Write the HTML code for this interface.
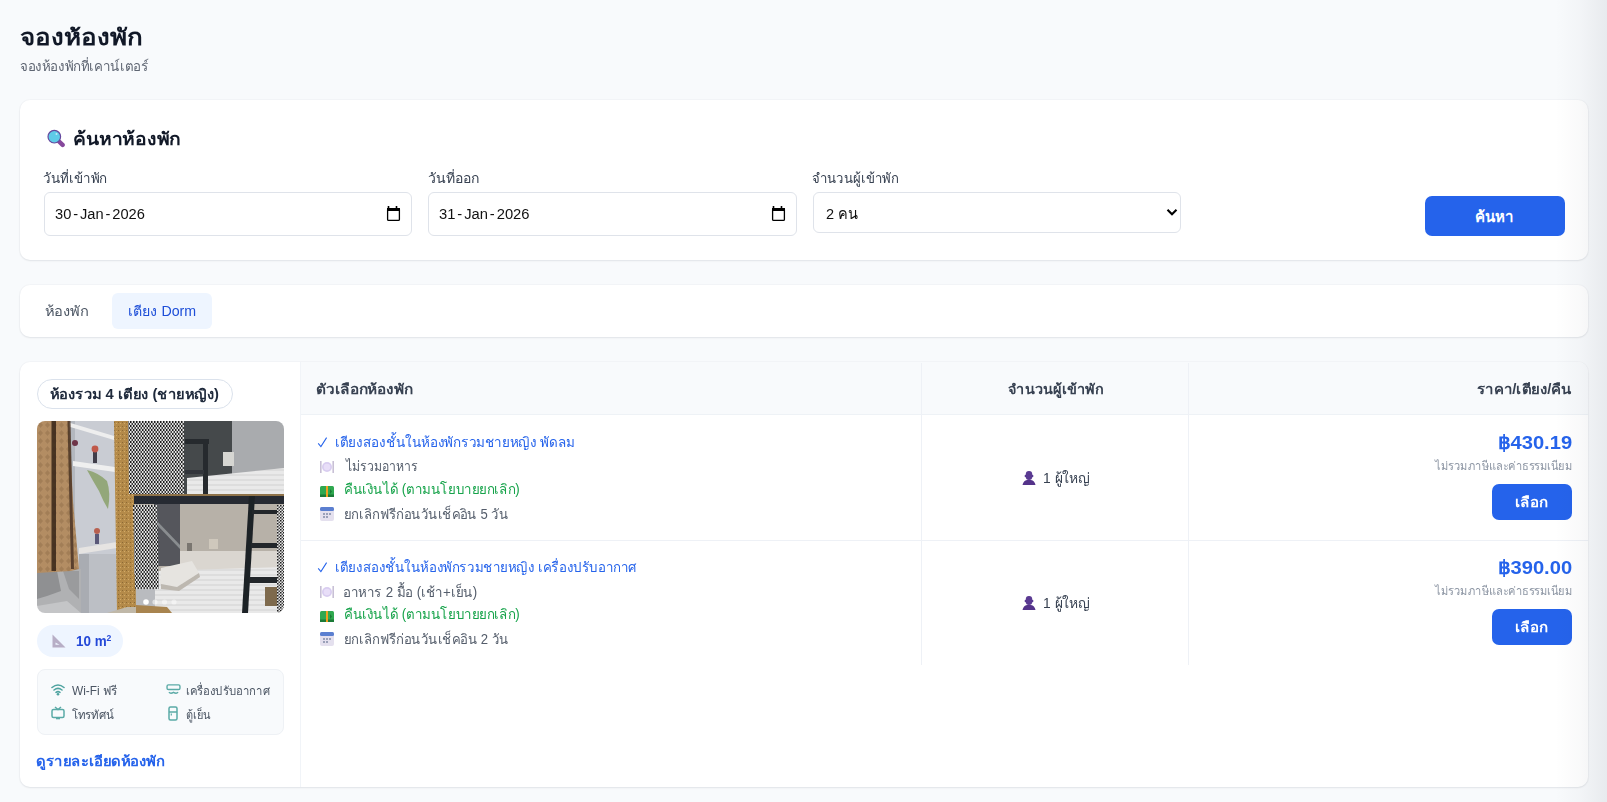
<!DOCTYPE html>
<html><head><meta charset="utf-8">
<style>
*{box-sizing:border-box;margin:0;padding:0}
html,body{width:1607px;height:802px;overflow:hidden}
body{background:#f8fafc;font-family:"Liberation Sans",sans-serif;color:#1f2937;position:relative}
.abs{position:absolute}
.t{position:absolute;white-space:nowrap;line-height:1}
.card{position:absolute;background:#fff;border-radius:10px;box-shadow:0 1px 2px rgba(15,23,42,.08),0 0 0 1px rgba(15,23,42,.02)}
.inp{position:absolute;background:#fff;border:1px solid #dfe3ea;border-radius:6px}
.btn{position:absolute;background:#2563eb;border-radius:7px}
.overlay{position:absolute;left:0;top:0;width:1607px;height:802px;pointer-events:none;
 background:linear-gradient(to right,rgba(0,0,0,0) 0px,rgba(0,0,0,0) 1555px,rgba(20,30,50,.025) 1580px,rgba(20,30,50,.06) 1600px,rgba(20,30,50,.07) 1607px)}
</style></head><body>
<div id="title" class="t" style="left:19.76px;top:27.35px;font-size:22px;font-weight:bold;color:#111827;transform:scaleX(1.1798);transform-origin:0 0;">จองห้องพัก</div>
<div id="subtitle" class="t" style="left:19.6px;top:59.35px;font-size:14px;font-weight:normal;color:#5f6673;transform:scaleX(0.9519);transform-origin:0 0;">จองห้องพักที่เคาน์เตอร์</div>
<div class="card" style="left:20px;top:100px;width:1568px;height:160px"></div>
<svg class="abs" style="left:46px;top:128px" width="20" height="20" viewBox="0 0 20 20"><path d="M12 12.5 L16.6 16.9" stroke="#86489c" stroke-width="4.4" stroke-linecap="round"/><circle cx="8.3" cy="8.7" r="6.3" fill="#5ecbe8" stroke="#64489e" stroke-width="1.2"/><circle cx="10.5" cy="6" r="1" fill="#bfeaf6"/></svg>
<div id="ctitle" class="t" style="left:73.4px;top:129.85px;font-size:18px;font-weight:bold;color:#111827;transform:scaleX(1.0707);transform-origin:0 0;">ค้นหาห้องพัก</div>
<div id="lab1" class="t" style="left:42.88px;top:170.9px;font-size:14px;font-weight:normal;color:#374151;transform:scaleX(0.9545);transform-origin:0 0;">วันที่เข้าพัก</div>
<div id="lab2" class="t" style="left:427.52px;top:170.75px;font-size:14px;font-weight:normal;color:#374151;transform:scaleX(1.0021);transform-origin:0 0;">วันที่ออก</div>
<div id="lab3" class="t" style="left:811.88px;top:171.0px;font-size:14px;font-weight:normal;color:#374151;transform:scaleX(0.9386);transform-origin:0 0;">จำนวนผู้เข้าพัก</div>
<div class="inp" style="left:44px;top:192px;width:368px;height:44px"></div>
<div class="inp" style="left:428px;top:192px;width:369px;height:44px"></div>
<div class="inp" style="left:813px;top:192px;width:368px;height:41px"></div>
<div id="date1" class="t" style="left:54.88px;top:205.9px;font-size:15.5px;font-weight:normal;color:#111;transform:scaleX(0.9457);transform-origin:0 0;">30<span style="margin:0 2px">-</span>Jan<span style="margin:0 2px">-</span>2026</div>
<div id="date2" class="t" style="left:438.8px;top:205.9px;font-size:15.5px;font-weight:normal;color:#111;transform:scaleX(0.9520);transform-origin:0 0;">31<span style="margin:0 2px">-</span>Jan<span style="margin:0 2px">-</span>2026</div>
<svg class="abs" style="left:386px;top:205px" width="15" height="17" viewBox="0 0 15 17"><path d="M2.5 1 V4 M10.5 1 V4" stroke="#000" stroke-width="1.6"/><rect x="1.6" y="3.6" width="11.8" height="11.8" rx="1" fill="none" stroke="#000" stroke-width="1.3"/><rect x="1" y="3" width="13" height="3" fill="#000"/></svg>
<svg class="abs" style="left:771px;top:205px" width="15" height="17" viewBox="0 0 15 17"><path d="M2.5 1 V4 M10.5 1 V4" stroke="#000" stroke-width="1.6"/><rect x="1.6" y="3.6" width="11.8" height="11.8" rx="1" fill="none" stroke="#000" stroke-width="1.3"/><rect x="1" y="3" width="13" height="3" fill="#000"/></svg>
<svg class="abs" style="left:1166px;top:208px" width="12" height="9" viewBox="0 0 12 9"><path d="M1.5 1.8 L6 6.3 L10.5 1.8" fill="none" stroke="#000" stroke-width="2.1"/></svg>
<div id="sel" class="t" style="left:825.8px;top:205.55px;font-size:15.5px;font-weight:normal;color:#111;transform:scaleX(0.9384);transform-origin:0 0;">2 คน</div>
<div class="btn" style="left:1425px;top:196px;width:140px;height:40px"></div>
<div id="sbtn" class="t" style="left:1475.24px;top:208.8px;font-size:15px;font-weight:bold;color:#fff;">ค้นหา</div>
<div class="card" style="left:20px;top:285px;width:1568px;height:52px"></div>
<div id="tab1" class="t" style="left:45.0px;top:304.35px;font-size:14px;font-weight:normal;color:#4b5563;transform:scaleX(1.0465);transform-origin:0 0;">ห้องพัก</div>
<div class="abs" style="left:112px;top:293px;width:100px;height:36px;background:#eef5ff;border-radius:6px"></div>
<div id="tab2" class="t" style="left:127.84px;top:303.5px;font-size:14px;font-weight:normal;color:#1d4ed8;transform:scaleX(1.0152);transform-origin:0 0;">เตียง Dorm</div>
<div class="card" style="left:20px;top:362px;width:1568px;height:425px;overflow:hidden">
  <div class="abs" style="left:280px;top:0;width:1288px;height:53px;background:#f8fafc;border-bottom:1px solid #eef2f6"></div>
  <div class="abs" style="left:280px;top:0;width:1px;height:425px;background:#f1f4f8"></div>
</div>
<div class="abs" style="left:37px;top:379px;width:196px;height:30px;border:1px solid #dbe2ec;border-radius:15px;background:#fff"></div>
<div id="chip" class="t" style="left:50.16px;top:386.6px;font-size:14px;font-weight:bold;color:#1e293b;transform:scaleX(1.0506);transform-origin:0 0;">ห้องรวม 4 เตียง (ชายหญิง)</div>
<svg class="abs" style="left:37px;top:421px" width="247" height="192" viewBox="0 0 247 192">
<defs>
<clipPath id="rc"><rect x="0" y="0" width="247" height="192" rx="8" ry="8"/></clipPath>
<pattern id="chk" width="3" height="3" patternUnits="userSpaceOnUse"><rect width="3" height="3" fill="#e8e8e8"/><rect width="1.5" height="1.5" fill="#1c1c1c"/><rect x="1.5" y="1.5" width="1.5" height="1.5" fill="#4a4a4a"/></pattern>
<pattern id="chk2" width="3" height="4" patternUnits="userSpaceOnUse"><rect width="3" height="4" fill="#e2e2e2"/><rect width="1.5" height="2" fill="#1a1a1a"/><rect x="1.5" y="2" width="1.5" height="2" fill="#3c3c3c"/></pattern>
<pattern id="dia" width="7" height="8" patternUnits="userSpaceOnUse"><rect width="7" height="8" fill="#b38d64"/><path d="M3.5 1 L6 4 L3.5 7 L1 4Z" fill="#94704c" opacity=".55"/></pattern>
<pattern id="cork" width="4" height="4" patternUnits="userSpaceOnUse"><rect width="4" height="4" fill="#b48a48"/><rect x="1" y="1" width="1" height="1" fill="#8c6a34"/><rect x="3" y="2" width="1" height="1" fill="#d0aa68"/></pattern>
<pattern id="str" width="5" height="5" patternUnits="userSpaceOnUse"><rect width="5" height="5" fill="#e9e9e9"/><rect y="3.5" width="5" height="1" fill="#d2d2d2"/></pattern>
<filter id="soft"><feGaussianBlur stdDeviation="0.35"/></filter>
</defs>
<g clip-path="url(#rc)"><g filter="url(#soft)">
<rect width="247" height="192" fill="#b9bbbf"/>
<!-- left wall -->
<rect x="30" y="0" width="50" height="192" fill="#c9ccd3"/>
<rect x="30" y="0" width="8" height="192" fill="#b3b7be"/>
<!-- shelves -->
<polygon points="30,1 77,15 77,19 30,5" fill="#eeeeee"/>
<polygon points="36,40 78,46 78,51 36,45" fill="#efefef"/>
<polygon points="42,127 80,121 80,127 42,133" fill="#e6e4e2"/>
<!-- lower wall -->
<rect x="42" y="133" width="38" height="59" fill="#bcbfc5"/>
<rect x="42" y="133" width="10" height="59" fill="#a9acb2"/>
<!-- flowers & plant -->
<rect x="56" y="31" width="4" height="11" fill="#3f3c4a"/>
<circle cx="58" cy="28" r="3.4" fill="#c0584a"/>
<circle cx="38" cy="22" r="3" fill="#6e3448"/>
<path d="M50 49 Q62 52 70 60 Q74 72 71 88 Q66 80 62 70 Q56 60 50 49Z" fill="#8aa06a" opacity=".85"/>
<rect x="58" y="113" width="4" height="10" fill="#5a5878"/>
<circle cx="60" cy="110" r="3" fill="#b86050"/>
<!-- lower left shadows -->
<rect x="0" y="148" width="44" height="44" fill="#b0b1b3"/>
<polygon points="0,150 20,150 24,170 10,175 0,178" fill="#8f9092"/>
<polygon points="26,150 42,150 42,178 32,168" fill="#9a9b9d"/>
<polygon points="0,185 30,180 44,192 0,192" fill="#c4c5c7"/>
<!-- curtain -->
<polygon points="0,0 32,0 36,80 42,148 34,150 0,152" fill="url(#dia)"/>
<rect x="14.5" y="0" width="4.5" height="150" fill="#3c2a1c" opacity=".9"/>
<polygon points="30.5,0 33.5,0 37,148 34,148" fill="#4a3424" opacity=".85"/>
<!-- cork strip -->
<polygon points="77,0 97,0 99,192 80,192" fill="url(#cork)"/>
<!-- upper back walls -->
<rect x="97" y="0" width="98" height="84" fill="#45484c"/>
<rect x="195" y="0" width="52" height="84" fill="#a9abae"/>
<rect x="186" y="31" width="11" height="14" fill="#d6d6d2"/>
<!-- upper mattress -->
<polygon points="150,57 247,47 247,73 150,73" fill="url(#str)"/>
<!-- upper checkered curtain -->
<polygon points="91,0 147,0 147,73 92,73" fill="url(#chk2)"/>
<!-- upper frame -->
<rect x="148" y="18" width="24" height="5" fill="#25292e"/>
<rect x="166" y="18" width="5" height="66" fill="#25292e"/>
<rect x="148" y="49" width="19" height="4" fill="#30343a"/>
<rect x="97" y="73" width="150" height="2" fill="#8e7248"/>
<rect x="97" y="75" width="150" height="8" fill="#262a30"/>
<!-- lower walls -->
<rect x="97" y="83" width="150" height="70" fill="#b7b1a8"/>
<rect x="117" y="83" width="26" height="62" fill="#54575b"/>
<polygon points="120,100 143,124 143,128 120,104" fill="#8a8d90"/>
<rect x="143" y="130" width="104" height="21" fill="#dad6d0"/>
<rect x="150" y="122" width="5" height="8" fill="#7a7670"/>
<rect x="172" y="118" width="9" height="10" fill="#cfc8bc"/>
<!-- lower bed -->
<polygon points="118,150 247,146 247,192 118,192" fill="url(#str)"/>
<polygon points="124,147 155,140 162,152 140,166 123,163" fill="#e6e4e0"/>
<polygon points="124,163 140,166 162,152 163,156 142,170 124,168" fill="#bdb8b0"/>
<!-- lower checkered -->
<polygon points="96,84 120,84 122,168 98,168" fill="url(#chk2)"/>
<!-- ladder -->
<polygon points="212,75 218,75 211,192 205,192" fill="#1f2328"/>
<rect x="215" y="89" width="32" height="4" fill="#23272c"/>
<rect x="214" y="122" width="33" height="5" fill="#23272c"/>
<rect x="212" y="156" width="35" height="6" fill="#23272c"/>
<rect x="240" y="84" width="7" height="108" fill="url(#chk)"/>
<rect x="228" y="166" width="12" height="19" fill="#7e6a4e"/>
<!-- floor cork -->
<polygon points="99,184 130,186 135,192 99,192" fill="#a88450"/>
<polygon points="70,192 90,186 99,186 99,192" fill="#c0b8a8"/>
</g>
<!-- dots -->
<circle cx="109" cy="181" r="2.8" fill="#ffffff"/>
<circle cx="118" cy="181" r="2.6" fill="#ffffff" opacity=".55"/>
<circle cx="127.5" cy="181" r="2.6" fill="#ffffff" opacity=".45"/>
<circle cx="137" cy="181" r="2.6" fill="#ffffff" opacity=".45"/>
</g>
</svg>

<div class="abs" style="left:37px;top:625px;width:86px;height:32px;border-radius:16px;background:#eef5ff"></div>
<svg class="abs" style="left:51px;top:633px" width="16" height="16" viewBox="0 0 16 16"><path d="M1.5 1.5 L14.5 14.5 L1.5 14.5Z" fill="#b7aec6"/><path d="M4.5 9.5 L8.5 11.8 L4.5 11.8Z" fill="#eef5ff"/></svg>
<div id="area" class="t" style="left:75.6px;top:633.8px;font-size:14px;font-weight:bold;color:#2348d8;transform:scaleX(0.9585);transform-origin:0 0;">10 m<sup style="font-size:9px;vertical-align:5px">2</sup></div>
<div class="abs" style="left:37px;top:669px;width:247px;height:66px;border:1px solid #eef1f5;border-radius:8px;background:#f8fafc"></div>
<svg class="abs" style="left:51px;top:683px" width="14" height="13" viewBox="0 0 14 13"><g fill="none" stroke="#4fa3a0" stroke-width="1.6" stroke-linecap="round"><path d="M1 4.5 Q7 -0.5 13 4.5"/><path d="M3 7 Q7 3.8 11 7"/><path d="M5 9.3 Q7 8 9 9.3"/></g><circle cx="7" cy="11.3" r="1.3" fill="#4fa3a0"/></svg>
<div id="am1" class="t" style="left:72.48px;top:684.75px;font-size:12px;font-weight:normal;color:#4b5563;transform:scaleX(0.9890);transform-origin:0 0;">Wi-Fi ฟรี</div>
<svg class="abs" style="left:165.5px;top:684px" width="15" height="12" viewBox="0 0 16 13"><g fill="none" stroke="#5aaaa6" stroke-width="1.5"><rect x="1" y="1" width="14" height="5" rx="1.5"/><path d="M3 9 Q5 11 8 9 Q11 11 13 9"/></g></svg>
<div id="am2" class="t" style="left:185.72px;top:685.1px;font-size:12px;font-weight:normal;color:#4b5563;transform:scaleX(0.9456);transform-origin:0 0;">เครื่องปรับอากาศ</div>
<svg class="abs" style="left:51px;top:706px" width="14" height="14" viewBox="0 0 14 14"><g fill="none" stroke="#5aaaa6" stroke-width="1.5"><rect x="1" y="3.5" width="12" height="8" rx="1.5"/><path d="M4 1 L7 3.5 L10 1"/></g><rect x="5" y="12" width="4" height="1.3" fill="#5aaaa6"/></svg>
<div id="am3" class="t" style="left:72.48px;top:709.3px;font-size:12px;font-weight:normal;color:#4b5563;transform:scaleX(0.9570);transform-origin:0 0;">โทรทัศน์</div>
<svg class="abs" style="left:168px;top:706px" width="10" height="15" viewBox="0 0 10 15"><g fill="none" stroke="#5aaaa6" stroke-width="1.5"><rect x="1" y="1" width="8" height="13" rx="1.5"/><path d="M1 6 H9"/></g><rect x="2.7" y="7.5" width="1.2" height="2" fill="#5aaaa6"/></svg>
<div id="am4" class="t" style="left:185.72px;top:709.0px;font-size:12px;font-weight:normal;color:#4b5563;transform:scaleX(0.9162);transform-origin:0 0;">ตู้เย็น</div>
<div id="link" class="t" style="left:36.2px;top:753.8px;font-size:14px;font-weight:bold;color:#2563eb;transform:scaleX(1.0609);transform-origin:0 0;">ดูรายละเอียดห้องพัก</div>
<div id="h1" class="t" style="left:316.36px;top:381.8px;font-size:14px;font-weight:bold;color:#374151;transform:scaleX(1.0955);transform-origin:0 0;">ตัวเลือกห้องพัก</div>
<div id="h2" class="t" style="left:1007.8px;top:381.8px;font-size:14px;font-weight:bold;color:#374151;transform:scaleX(1.0316);transform-origin:0 0;">จำนวนผู้เข้าพัก</div>
<div id="h3" class="t" style="right:34.92000000000007px;top:381.5px;font-size:14px;font-weight:bold;color:#374151;transform:scaleX(1.0687);transform-origin:100% 0;">ราคา/เตียง/คืน</div>
<div class="abs" style="left:921px;top:363px;width:1px;height:302px;background:#eef1f6"></div>
<div class="abs" style="left:1188px;top:363px;width:1px;height:302px;background:#eef1f6"></div>
<div class="abs" style="left:301px;top:540px;width:1287px;height:1px;background:#eef1f6"></div>
<svg class="abs" style="left:317px;top:437px" width="11" height="11" viewBox="0 0 11 11"><path d="M1.2 6.3 L3.9 9.6 L9.6 0.6" fill="none" stroke="#2563eb" stroke-width="1.05"/></svg>
<div id="r1t" class="t" style="left:335.44px;top:435.4px;font-size:14px;font-weight:normal;color:#2563eb;transform:scaleX(0.9605);transform-origin:0 0;">เตียงสองชั้นในห้องพักรวมชายหญิง พัดลม</div>
<svg class="abs" style="left:320px;top:461px" width="14" height="12" viewBox="0 0 14 12"><rect x="0" y="0" width="1.6" height="12" fill="#c8c0d6"/><rect x="12.4" y="0" width="1.6" height="12" fill="#c8c0d6"/><circle cx="7" cy="6" r="5" fill="#d9cdf0"/><circle cx="7" cy="6" r="3.3" fill="#e8def8"/></svg>
<div id="r1m" class="t" style="left:345.92px;top:459.4px;font-size:14px;font-weight:normal;color:#545d6b;transform:scaleX(0.8746);transform-origin:0 0;">ไม่รวมอาหาร</div>
<svg class="abs" style="left:320px;top:486px" width="14" height="11" viewBox="0 0 14 11"><rect x="0" y="0" width="14" height="11" rx="1.5" fill="#2fa84f"/><rect x="0" y="8.5" width="14" height="2.5" fill="#1b7a37"/><rect x="6" y="0" width="2" height="11" fill="#f0a020"/><path d="M10 3 L12 5.5 L10 8Z" fill="#1b7a37"/></svg>
<div id="r1r" class="t" style="left:343.52px;top:481.95px;font-size:14px;font-weight:normal;color:#16a34a;transform:scaleX(0.9489);transform-origin:0 0;">คืนเงินได้ (ตามนโยบายยกเลิก)</div>
<svg class="abs" style="left:320px;top:507px" width="14" height="14" viewBox="0 0 14 14"><rect x="0" y="0" width="14" height="14" rx="2" fill="#e4e0ee"/><rect x="0" y="0" width="14" height="4" rx="1.5" fill="#5b7fd0"/><g fill="#9aa0b8"><rect x="3" y="6" width="2" height="2"/><rect x="6" y="6" width="2" height="2"/><rect x="9" y="6" width="2" height="2"/><rect x="3" y="9" width="2" height="2"/><rect x="6" y="9" width="2" height="2"/></g></svg>
<div id="r1c" class="t" style="left:343.52px;top:507.4px;font-size:14px;font-weight:normal;color:#545d6b;transform:scaleX(0.9355);transform-origin:0 0;">ยกเลิกฟรีก่อนวันเช็คอิน 5 วัน</div>
<svg class="abs" style="left:1022px;top:471px" width="14" height="14" viewBox="0 0 14 14"><rect x="3.8" y="0" width="6.4" height="9" rx="3" fill="#5a3a92"/><ellipse cx="3.6" cy="5" rx="1" ry="1.3" fill="#5a3a92"/><ellipse cx="10.4" cy="5" rx="1" ry="1.3" fill="#5a3a92"/><path d="M0.5 14 Q1.5 9.5 5 9 L9 9 Q12.5 9.5 13.5 14Z" fill="#54338a"/></svg>
<div id="p1" class="t" style="left:1042.76px;top:470.85px;font-size:14px;font-weight:normal;color:#374151;transform:scaleX(0.9857);transform-origin:0 0;">1 ผู้ใหญ่</div>
<div id="pr1" class="t" style="right:35.16000000000008px;top:432.55px;font-size:19px;font-weight:bold;color:#2563eb;transform:scaleX(1.0609);transform-origin:100% 0;">฿430.19</div>
<div id="n1" class="t" style="right:34.59999999999991px;top:459.65px;font-size:12px;font-weight:normal;color:#8c95a3;transform:scaleX(0.9223);transform-origin:100% 0;">ไม่รวมภาษีและค่าธรรมเนียม</div>
<div class="btn" style="left:1492px;top:484px;width:80px;height:36px"></div>
<div id="b1" class="t" style="left:1515.12px;top:494.85px;font-size:14px;font-weight:bold;color:#fff;transform:scaleX(1.0762);transform-origin:0 0;">เลือก</div>
<svg class="abs" style="left:317px;top:562px" width="11" height="11" viewBox="0 0 11 11"><path d="M1.2 6.3 L3.9 9.6 L9.6 0.6" fill="none" stroke="#2563eb" stroke-width="1.05"/></svg>
<div id="r2t" class="t" style="left:334.72px;top:560.4px;font-size:14px;font-weight:normal;color:#2563eb;transform:scaleX(0.9496);transform-origin:0 0;">เตียงสองชั้นในห้องพักรวมชายหญิง เครื่องปรับอากาศ</div>
<svg class="abs" style="left:320px;top:586px" width="14" height="12" viewBox="0 0 14 12"><rect x="0" y="0" width="1.6" height="12" fill="#c8c0d6"/><rect x="12.4" y="0" width="1.6" height="12" fill="#c8c0d6"/><circle cx="7" cy="6" r="5" fill="#d9cdf0"/><circle cx="7" cy="6" r="3.3" fill="#e8def8"/></svg>
<div id="r2m" class="t" style="left:343.12px;top:584.85px;font-size:14px;font-weight:normal;color:#545d6b;transform:scaleX(0.9511);transform-origin:0 0;">อาหาร 2 มื้อ (เช้า+เย็น)</div>
<svg class="abs" style="left:320px;top:611px" width="14" height="11" viewBox="0 0 14 11"><rect x="0" y="0" width="14" height="11" rx="1.5" fill="#2fa84f"/><rect x="0" y="8.5" width="14" height="2.5" fill="#1b7a37"/><rect x="6" y="0" width="2" height="11" fill="#f0a020"/><path d="M10 3 L12 5.5 L10 8Z" fill="#1b7a37"/></svg>
<div id="r2r" class="t" style="left:343.52px;top:606.95px;font-size:14px;font-weight:normal;color:#16a34a;transform:scaleX(0.9489);transform-origin:0 0;">คืนเงินได้ (ตามนโยบายยกเลิก)</div>
<svg class="abs" style="left:320px;top:632px" width="14" height="14" viewBox="0 0 14 14"><rect x="0" y="0" width="14" height="14" rx="2" fill="#e4e0ee"/><rect x="0" y="0" width="14" height="4" rx="1.5" fill="#5b7fd0"/><g fill="#9aa0b8"><rect x="3" y="6" width="2" height="2"/><rect x="6" y="6" width="2" height="2"/><rect x="9" y="6" width="2" height="2"/><rect x="3" y="9" width="2" height="2"/><rect x="6" y="9" width="2" height="2"/></g></svg>
<div id="r2c" class="t" style="left:343.52px;top:632.4px;font-size:14px;font-weight:normal;color:#545d6b;transform:scaleX(0.9371);transform-origin:0 0;">ยกเลิกฟรีก่อนวันเช็คอิน 2 วัน</div>
<svg class="abs" style="left:1022px;top:596px" width="14" height="14" viewBox="0 0 14 14"><rect x="3.8" y="0" width="6.4" height="9" rx="3" fill="#5a3a92"/><ellipse cx="3.6" cy="5" rx="1" ry="1.3" fill="#5a3a92"/><ellipse cx="10.4" cy="5" rx="1" ry="1.3" fill="#5a3a92"/><path d="M0.5 14 Q1.5 9.5 5 9 L9 9 Q12.5 9.5 13.5 14Z" fill="#54338a"/></svg>
<div id="p2" class="t" style="left:1042.76px;top:595.85px;font-size:14px;font-weight:normal;color:#374151;transform:scaleX(0.9857);transform-origin:0 0;">1 ผู้ใหญ่</div>
<div id="pr2" class="t" style="right:35.16000000000008px;top:557.55px;font-size:19px;font-weight:bold;color:#2563eb;transform:scaleX(1.0609);transform-origin:100% 0;">฿390.00</div>
<div id="n2" class="t" style="right:34.59999999999991px;top:584.65px;font-size:12px;font-weight:normal;color:#8c95a3;transform:scaleX(0.9223);transform-origin:100% 0;">ไม่รวมภาษีและค่าธรรมเนียม</div>
<div class="btn" style="left:1492px;top:609px;width:80px;height:36px"></div>
<div id="b2" class="t" style="left:1515.12px;top:619.85px;font-size:14px;font-weight:bold;color:#fff;transform:scaleX(1.0762);transform-origin:0 0;">เลือก</div>
<div class="overlay"></div>
</body></html>
